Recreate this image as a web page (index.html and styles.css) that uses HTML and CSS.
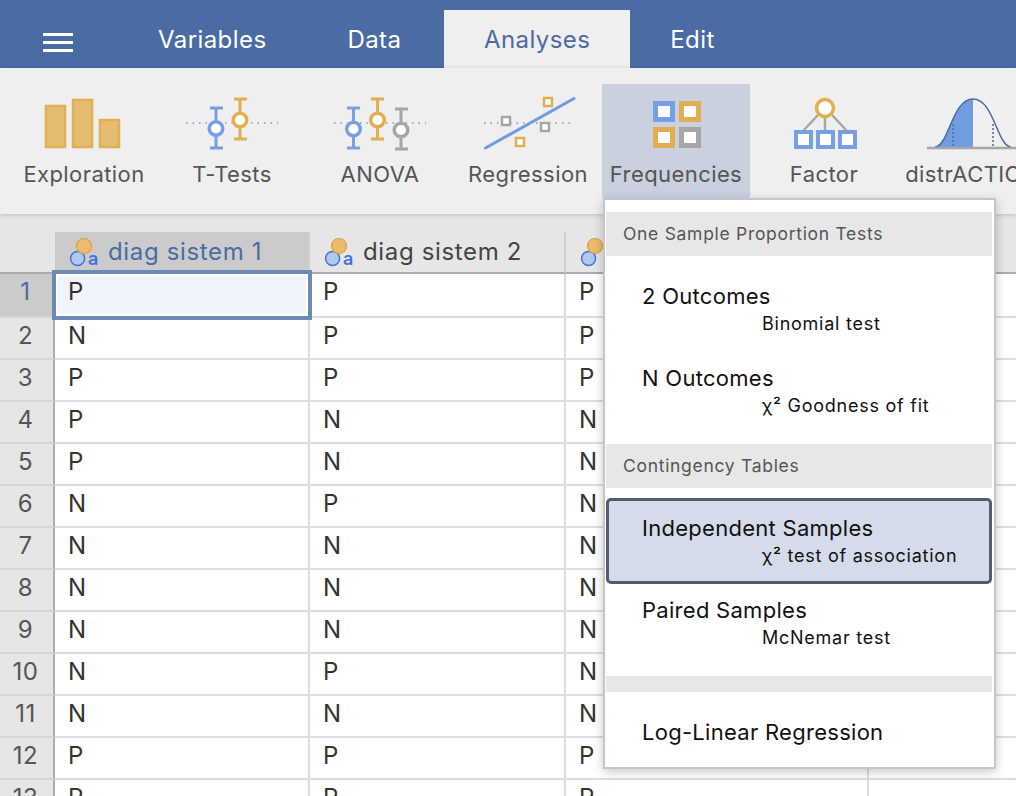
FILE: index.html
```html
<!DOCTYPE html>
<html lang="en">
<head>
<meta charset="utf-8">
<title>Frequencies menu</title>
<link rel="stylesheet" href="styles.css">
</head>
<body>
<div class="app">
  <header class="topbar">
    <div class="burger"><span></span><span></span><span></span></div>
    <div class="tab">Variables</div>
    <div class="tab">Data</div>
    <div class="tab tab-active">Analyses</div>
    <div class="tab">Edit</div>
  </header>

  <nav class="ribbon">
    <div class="tool">
      <svg class="tool-icon" viewBox="0 0 100 60"><g class="bar"><rect x="12" y="14" width="19" height="41"/><rect x="39" y="8" width="19" height="47"/><rect x="66" y="28" width="19" height="27"/></g></svg>
      <span>Exploration</span>
    </div>
    <div class="tool">
      <svg class="tool-icon" viewBox="0 0 100 60"><line class="dots" x1="4" y1="31" x2="96" y2="31"/>
        <g class="eb blue"><path d="M34 15v42M28 16h13M28 56h13"/><circle cx="34" cy="36.500" r="6.800"/></g>
        <g class="eb orange"><path d="M58 6v42M52 7h13M52 47h13"/><circle cx="58" cy="28" r="6.800"/></g></svg>
      <span>T-Tests</span>
    </div>
    <div class="tool">
      <svg class="tool-icon" viewBox="0 0 100 60"><line class="dots" x1="4" y1="31" x2="96" y2="31"/>
        <g class="eb blue"><path d="M23.500 15v42M17 16h13M17 56h13"/><circle cx="23.500" cy="37" r="6.800"/></g>
        <g class="eb orange"><path d="M47.500 6v42M41 7h13M41 47h13"/><circle cx="47.500" cy="28" r="6.800"/></g>
        <g class="eb grey"><path d="M71 16v42M65 17h13M65 57h13"/><circle cx="71" cy="38" r="6.800"/></g></svg>
      <span>ANOVA</span>
    </div>
    <div class="tool">
      <svg class="tool-icon" viewBox="0 0 100 60"><line class="dots" x1="6" y1="31" x2="97" y2="31"/>
        <line class="reg" x1="7.500" y1="56" x2="96" y2="6.500"/>
        <g class="pt orange"><rect x="66" y="6" width="8" height="8"/><rect x="38" y="46" width="8" height="8"/></g>
        <g class="pt grey"><rect x="24" y="25" width="8" height="8"/><rect x="63" y="31" width="8" height="8"/></g></svg>
      <span>Regression</span>
    </div>
    <div class="tool tool-active">
      <svg class="tool-icon" viewBox="0 0 100 60"><g class="sq">
        <rect class="blue" x="29.500" y="11.500" width="17" height="16"/><rect class="orange" x="55.500" y="11.500" width="17" height="16"/>
        <rect class="orange" x="29.500" y="37.500" width="17" height="16"/><rect class="grey" x="55.500" y="37.500" width="17" height="16"/></g></svg>
      <span>Frequencies</span>
    </div>
    <div class="tool">
      <svg class="tool-icon" viewBox="0 0 100 60"><path class="link" d="M44 23L29 39M51 25V39M58 23L73 39"/>
        <circle class="root" cx="51" cy="16" r="8.500"/>
        <g class="fac"><rect x="22" y="40" width="15" height="15"/><rect x="44" y="40" width="15" height="15"/><rect x="66" y="40" width="15" height="15"/></g></svg>
      <span>Factor</span>
    </div>
    <div class="tool">
      <svg class="tool-icon" viewBox="0 0 100 60"><path class="dist-fill" d="M13 55C27 54 30 7 51 7V55Z"/>
        <path class="dist-line" d="M13 55C27 54 30 7 51 7C72 7 75 54 89 55"/>
        <path class="dist-dots" d="M31 32V55M71 32V55"/>
        <line class="dist-base" x1="5" y1="56" x2="100" y2="56"/></svg>
      <span>distrACTION</span>
    </div>
  </nav>

  <main class="sheet">
    <div class="row head">
      <div class="rownum"></div>
      <div class="col col-sel"><svg class="var-icon" viewBox="0 0 34 32"><circle class="vi-b" cx="9.600" cy="23.500" r="7"/><circle class="vi-o" cx="16" cy="11" r="7.500"/><text class="vi-a" x="20" y="30">a</text></svg>diag sistem 1</div>
      <div class="col"><svg class="var-icon" viewBox="0 0 34 32"><circle class="vi-b" cx="9.600" cy="23.500" r="7"/><circle class="vi-o" cx="16" cy="11" r="7.500"/><text class="vi-a" x="20" y="30">a</text></svg>diag sistem 2</div>
      <div class="col"><svg class="var-icon" viewBox="0 0 34 32"><circle class="vi-b" cx="9.600" cy="23.500" r="7"/><circle class="vi-o" cx="16" cy="11" r="7.500"/></svg></div>
      <div class="col col-end"></div>
    </div>
    <div class="row row-first"><div class="rownum rownum-sel">1</div><div class="cell cell-sel">P</div><div class="cell">P</div><div class="cell">P</div><div class="cell cell-end"></div></div>
    <div class="row"><div class="rownum">2</div><div class="cell">N</div><div class="cell">P</div><div class="cell">P</div><div class="cell cell-end"></div></div>
    <div class="row"><div class="rownum">3</div><div class="cell">P</div><div class="cell">P</div><div class="cell">P</div><div class="cell cell-end"></div></div>
    <div class="row"><div class="rownum">4</div><div class="cell">P</div><div class="cell">N</div><div class="cell">N</div><div class="cell cell-end"></div></div>
    <div class="row"><div class="rownum">5</div><div class="cell">P</div><div class="cell">N</div><div class="cell">N</div><div class="cell cell-end"></div></div>
    <div class="row"><div class="rownum">6</div><div class="cell">N</div><div class="cell">P</div><div class="cell">N</div><div class="cell cell-end"></div></div>
    <div class="row"><div class="rownum">7</div><div class="cell">N</div><div class="cell">N</div><div class="cell">N</div><div class="cell cell-end"></div></div>
    <div class="row"><div class="rownum">8</div><div class="cell">N</div><div class="cell">N</div><div class="cell">N</div><div class="cell cell-end"></div></div>
    <div class="row"><div class="rownum">9</div><div class="cell">N</div><div class="cell">N</div><div class="cell">N</div><div class="cell cell-end"></div></div>
    <div class="row"><div class="rownum">10</div><div class="cell">N</div><div class="cell">P</div><div class="cell">N</div><div class="cell cell-end"></div></div>
    <div class="row"><div class="rownum">11</div><div class="cell">N</div><div class="cell">N</div><div class="cell">N</div><div class="cell cell-end"></div></div>
    <div class="row"><div class="rownum">12</div><div class="cell">P</div><div class="cell">P</div><div class="cell">P</div><div class="cell cell-end"></div></div>
    <div class="row"><div class="rownum">13</div><div class="cell">P</div><div class="cell">P</div><div class="cell">P</div><div class="cell cell-end"></div></div>
  </main>

  <aside class="menu">
    <div class="menu-head">One Sample Proportion Tests</div>
    <div class="item"><div class="item-title">2 Outcomes</div><div class="item-sub">Binomial test</div></div>
    <div class="item"><div class="item-title">N Outcomes</div><div class="item-sub">χ² Goodness of fit</div></div>
    <div class="menu-head">Contingency Tables</div>
    <div class="item item-sel"><div class="item-title">Independent Samples</div><div class="item-sub">χ² test of association</div></div>
    <div class="item"><div class="item-title">Paired Samples</div><div class="item-sub">McNemar test</div></div>
    <div class="menu-sep"></div>
    <div class="item item-single"><div class="item-title">Log-Linear Regression</div></div>
  </aside>
</div>
</body>
</html>
```

FILE: styles.css
```css
* { box-sizing: border-box; }
html, body { margin: 0; padding: 0; height: 100%; overflow: hidden; }
body { font-family: Inter, "Liberation Sans", sans-serif; background: #e6e6e6; }
.app { position: relative; width: 1016px; height: 796px; overflow: hidden; }

/* top bar */
.topbar { display: flex; height: 68px; background: #4a6ba4; color: #fff; font-size: 24px; letter-spacing: .42px; }
.burger { width: 118px; padding: 33px 0 0 43px; display: flex; flex-direction: column; gap: 5px; }
.burger span { display: block; width: 30px; height: 3px; background: #fff; }
.tab { margin-top: 10px; height: 58px; padding: 0 41px 0 40px; line-height: 60px; white-space: nowrap; }
.tab-active { margin-left: 1.500px; padding: 0 40px; background: #efefef; color: #4a6ba4; }

/* ribbon */
.ribbon { position: relative; z-index: 2; display: flex; height: 146px; padding: 16px 0 0 10px; background: #efefef; box-shadow: 0 1px 5px rgba(0,0,0,.18); }
.tool { flex: none; width: 148px; height: 114px; padding-top: 8px; display: flex; flex-direction: column; align-items: center; color: #555; font-size: 22px; letter-spacing: .42px; white-space: nowrap; }
.tool span { line-height: 28px; margin-top: 8px; }
.tool-active { background: #c9d1df; border-radius: 2px; }
.tool-icon { flex: none; width: 100px; height: 60px; overflow: visible; }

.bar rect { fill: #e5bd72; stroke: #e1ae52; stroke-width: 2.500; }
.dots { stroke: #4a6ba4; stroke-width: 1; stroke-dasharray: 1.500 5; }
.eb path { fill: none; stroke-width: 3; }
.eb circle { fill: #fff; stroke-width: 3.500; }
.eb.blue path, .eb.blue circle { stroke: #76a0e3; }
.eb.orange path, .eb.orange circle { stroke: #e2ae50; }
.eb.grey path, .eb.grey circle { stroke: #a6a6a6; }
.reg { stroke: #6e9be3; stroke-width: 3; stroke-linecap: round; }
.pt rect { fill: #fff; stroke-width: 2.500; }
.pt.orange rect { stroke: #e2ae50; }
.pt.grey rect { stroke: #a6a6a6; }
.sq rect { fill: #fff; stroke-width: 5; }
.sq .blue { stroke: #76a0e3; }
.sq .orange { stroke: #e2ae50; }
.sq .grey { stroke: #a6a6a6; }
.link { fill: none; stroke: #a6a6a6; stroke-width: 2.500; }
.root { fill: #fff; stroke: #e2ae50; stroke-width: 3.500; }
.fac rect { fill: #fff; stroke: #76a0e3; stroke-width: 4; }
.dist-fill { fill: #729ce0; }
.dist-line { fill: none; stroke: #4a6ba4; stroke-width: 1.500; }
.dist-dots { fill: none; stroke: #4a6ba4; stroke-width: 1.500; stroke-dasharray: 2 2; }
.dist-base { stroke: #a6a6a6; stroke-width: 2.500; }

/* sheet */
.sheet { padding-top: 18px; }
.row { display: grid; grid-template-columns: 55px 255px 256px 303px 147px; height: 42px; }
.row-first { height: 44px; }
.head { height: 42px; }
.rownum { background: #e6e6e6; border-right: 2px solid #ababab; border-bottom: 2px solid #d6d6d6; padding-right: 2px; text-align: center; font-size: 24px; line-height: 36px; letter-spacing: .5px; color: #555; }
.head .rownum { border-right: 0; border-bottom: 2px solid #ababab; }
.rownum-sel { background: #cbcbcb; color: #4a6ba4; }
.col { background: #e6e6e6; border-right: 2px solid #cfcfcf; border-bottom: 2px solid #ababab; padding-left: 53px; position: relative; font-size: 24px; line-height: 40px; letter-spacing: .65px; color: #444; white-space: nowrap; overflow: hidden; }
.col-end { border-right: 0; }
.col-sel { background: #cbcbcb; color: #4a6ba4; }
.var-icon { position: absolute; left: 13px; top: 3px; width: 34px; height: 32px; overflow: visible; }
.vi-o { fill: #ebbc6e; stroke: #d9a23f; stroke-width: 1.200; }
.vi-b { fill: #b1c9f0; stroke: #3f74e0; stroke-width: 1.500; }
.vi-a { font-family: Inter, "Liberation Sans", sans-serif; font-size: 18px; font-weight: 600; fill: #3f74e0; letter-spacing: 0; }
.cell { background: #fff; border-right: 2px solid #ddd; border-bottom: 2px solid #ddd; padding-left: 13px; font-size: 24px; line-height: 36px; color: #333; }
.cell-end { border-right: 0; }
.cell-sel { position: relative; z-index: 1; background: #eff3fb; }
.cell-sel::after { content: ""; position: absolute; left: -3px; right: -4px; top: -4px; bottom: -4px; border: 4px solid #6b8ab8; box-shadow: inset 0 0 0 2px #fff; }

/* dropdown */
.menu { position: absolute; z-index: 3; left: 603px; top: 198px; width: 393px; height: 571px; padding: 12px 2px 0 1px; background: #fff; border: 2px solid #c6c6c6; box-shadow: 0 3px 10px rgba(0,0,0,.22); }
.menu-head { height: 44px; padding-left: 17px; background: #e7e7e7; font-size: 17.500px; line-height: 44px; letter-spacing: .7px; color: #555; }
.menu-sep { height: 16px; margin-top: 12px; background: #e7e7e7; }
.item { height: 82px; margin: 12px 2px; padding: 14px 0 0 34px; color: #111; }
.item + .item { margin-top: -12px; }
.item-title { font-size: 22px; line-height: 28px; letter-spacing: .28px; }
.item-sub { margin-top: 1px; font-size: 18px; line-height: 26px; letter-spacing: .75px; padding-left: 120px; }
.item-single { height: 56px; margin-bottom: 0; padding-top: 14px; }
.item-sel { background: #d5dce9; border-radius: 3px; outline: 3px solid #525c6e; outline-offset: -1px; }
```
